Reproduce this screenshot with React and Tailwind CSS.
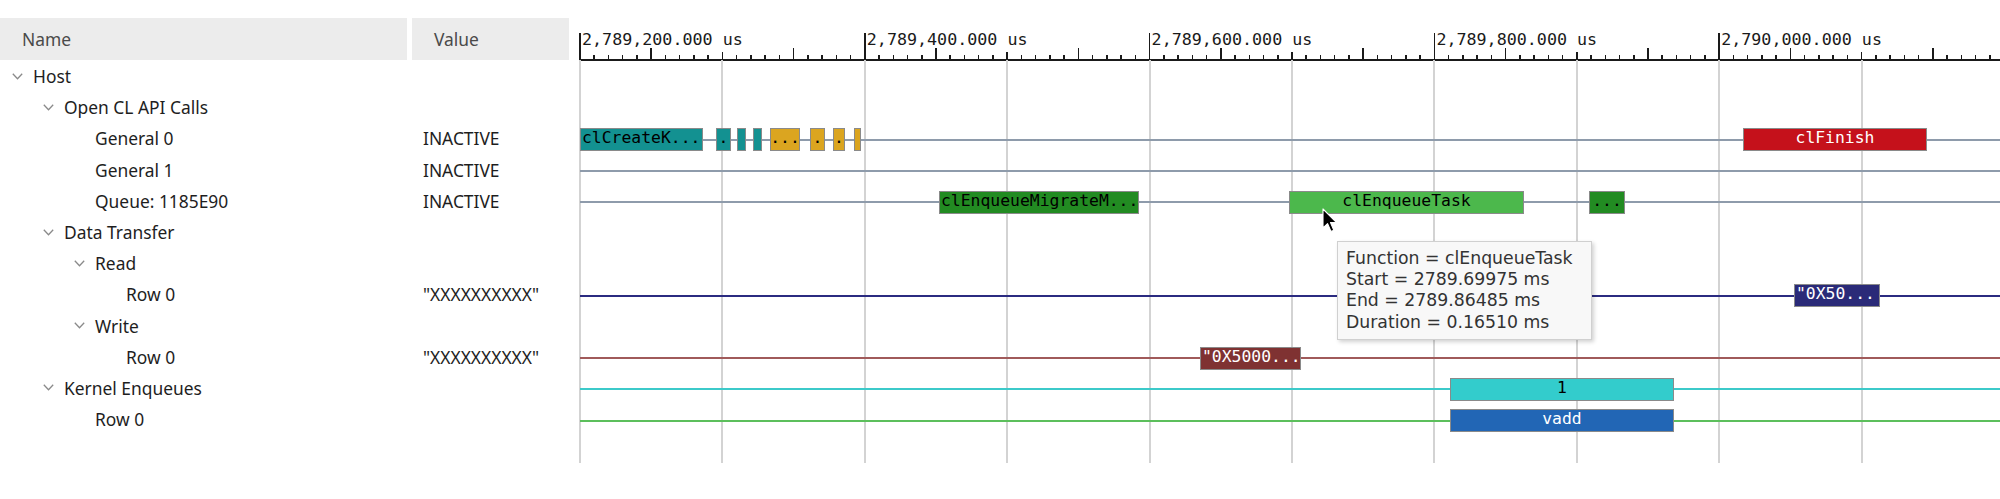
import React from 'react';

const MAJOR = 284.8;
const MINOR = MAJOR / 20;
const WIDTH = 1420;
const LABELS = ['2,789,200.000 us', '2,789,400.000 us', '2,789,600.000 us', '2,789,800.000 us', '2,790,000.000 us'];

const TEAL = 'bg-[#139191] text-black';
const GOLD = 'bg-[#dba520] text-black';

const tree = [
  { name: 'Host', pad: 'pl-[12px]', chev: true },
  { name: 'Open CL API Calls', pad: 'pl-[43px]', chev: true },
  { name: 'General 0', pad: 'pl-[95px]', value: 'INACTIVE' },
  { name: 'General 1', pad: 'pl-[95px]', value: 'INACTIVE' },
  { name: 'Queue: 1185E90', pad: 'pl-[95px]', value: 'INACTIVE' },
  { name: 'Data Transfer', pad: 'pl-[43px]', chev: true },
  { name: 'Read', pad: 'pl-[74px]', chev: true },
  { name: 'Row 0', pad: 'pl-[126px]', value: '"XXXXXXXXXX"' },
  { name: 'Write', pad: 'pl-[74px]', chev: true },
  { name: 'Row 0', pad: 'pl-[126px]', value: '"XXXXXXXXXX"' },
  { name: 'Kernel Enqueues', pad: 'pl-[43px]', chev: true },
  { name: 'Row 0', pad: 'pl-[95px]' },
];

// timeline rows, same order as tree
const lanes = [
  {},
  {},
  {
    line: 'bg-[#8e9bab]',
    bars: [
      { x: 0, w: 123, c: TEAL, t: 'clCreateK...' },
      { x: 136, w: 15, c: TEAL, t: '.', mid: true },
      { x: 157, w: 9, c: TEAL },
      { x: 173, w: 9, c: TEAL },
      { x: 190, w: 30, c: GOLD, t: '...', mid: true },
      { x: 230, w: 15, c: GOLD, t: '.', mid: true },
      { x: 253, w: 12, c: GOLD, t: '.', mid: true },
      { x: 274, w: 7, c: GOLD },
      { x: 1163, w: 184, c: 'bg-[#c5111b] text-white', t: 'clFinish', mid: true },
    ],
  },
  { line: 'bg-[#8e9bab]' },
  {
    line: 'bg-[#8e9bab]',
    bars: [
      { x: 359, w: 200, c: 'bg-[#228b22] text-black', t: 'clEnqueueMigrateM...' },
      { x: 709, w: 235, c: 'bg-[#4cb84c] text-black', t: 'clEnqueueTask', mid: true },
      { x: 1009, w: 36, c: 'bg-[#228b22] text-black', t: '...', mid: true },
    ],
  },
  {},
  {},
  { line: 'bg-[#2b2b80]', bars: [{ x: 1214, w: 86, c: 'bg-[#2a2a78] text-white', t: '"0X50...' }] },
  {},
  { line: 'bg-[#a05a5a]', bars: [{ x: 620, w: 101, c: 'bg-[#7f3232] text-white', t: '"0X5000...' }] },
  { line: 'bg-[#3ccaca]', bars: [{ x: 870, w: 224, c: 'bg-[#33cccc] text-black', t: '1', mid: true }] },
  { line: 'bg-[#5cbf5c]', bars: [{ x: 870, w: 224, c: 'bg-[#2266b5] text-white', t: 'vadd', mid: true }] },
];

function Chevron() {
  return (
    <svg width="11" height="7" viewBox="0 0 11 7" className="mr-[10px] shrink-0">
      <polyline points="0.8,0.8 5.5,5.8 10.2,0.8" fill="none" stroke="#8a8a8a" strokeWidth="1.3" />
    </svg>
  );
}

function Ruler() {
  const ticks = [];
  for (let k = 0; k * MINOR <= WIDTH; k++) {
    let cls = 'top-[55px] h-[5px]';
    if (k % 20 === 0) cls = 'top-[33px] h-[27px]';
    else if (k % 10 === 0) cls = 'top-[52px] h-[8px]';
    else if (k % 5 === 0) cls = 'top-[48px] h-[12px]';
    ticks.push(<div key={k} className={`absolute w-[1.5px] bg-[#1a1a1a] ${cls}`} style={{ left: k * MINOR - 0.75 }} />);
  }
  return (
    <div className="relative h-[60px]">
      {ticks}
      {LABELS.map((l, i) => (
        <div key={l} className="absolute top-[31px] font-['DejaVu_Sans_Mono',monospace] text-[16.7px] leading-none text-[#1a1a1a] whitespace-nowrap" style={{ left: i * MAJOR + 2 }}>
          {l}
        </div>
      ))}
      <div className="absolute left-0 right-0 top-[59px] h-[2px] bg-[#1a1a1a]" />
    </div>
  );
}

export default function App() {
  const grid = [];
  for (let j = 0; j * (MAJOR / 2) <= WIDTH; j++) grid.push(j * (MAJOR / 2));

  return (
    <div className="relative w-[2000px] h-[499px] bg-white overflow-hidden flex">
      {/* names / values */}
      <div className="w-[580px] shrink-0 font-['Noto_Sans',sans-serif] text-[17.4px] text-[#1e1e1e]">
        <div className="mt-[18px] h-[42px] flex text-[#4a4a4a]">
          <div className="w-[407px] bg-[#ececec] flex items-center pl-[22px]">Name</div>
          <div className="w-[5px]" />
          <div className="w-[157px] bg-[#ececec] flex items-center pl-[22px]">Value</div>
        </div>
        <div className="pt-[2px]">
          {tree.map((r, i) => (
            <div key={i} className="h-[31.2px] flex items-center pb-[3px] whitespace-nowrap">
              <div className={`w-[423px] flex items-center ${r.pad}`}>
                {r.chev && <Chevron />}
                <span>{r.name}</span>
              </div>
              <div>{r.value}</div>
            </div>
          ))}
        </div>
      </div>

      {/* timeline */}
      <div className="relative flex-1">
        <Ruler />
        <div className="relative h-[403px]">
          {grid.map((x) => (
            <div key={x} className="absolute top-0 bottom-0 w-[2px] bg-[#d3d3d3]" style={{ left: x - 1 }} />
          ))}
          <div className="pt-[2px]">
            {lanes.map((lane, i) => (
              <div key={i} className="relative h-[31.2px]">
                {lane.line && <div className={`absolute left-0 right-0 top-[14.6px] h-[2px] ${lane.line}`} />}
                {(lane.bars || []).map((b, n) => (
                  <div
                    key={n}
                    className={`absolute top-[4.1px] h-[23px] border border-[#8a8a8a] whitespace-nowrap font-['DejaVu_Sans_Mono',monospace] text-[16.4px] leading-[17.5px] ${b.c} ${b.mid ? 'flex justify-center' : 'pl-[1px]'}`}
                    style={{ left: b.x, width: b.w }}
                  >
                    {b.t}
                  </div>
                ))}
              </div>
            ))}
          </div>
        </div>
      </div>

      {/* hover tooltip */}
      <div className="absolute left-[1337px] top-[241px] w-[255px] border border-[#d0d0d0] bg-[#f8f8f8] pl-[8px] pt-[5.7px] pb-[6px] shadow-[2px_2px_4px_rgba(0,0,0,0.18)] font-['DejaVu_Sans',sans-serif] text-[17.3px] leading-[21.3px] text-[#333333] whitespace-nowrap">
        <div>Function = clEnqueueTask</div>
        <div>Start = 2789.69975 ms</div>
        <div>End = 2789.86485 ms</div>
        <div>Duration = 0.16510 ms</div>
      </div>

      {/* mouse pointer */}
      <svg className="absolute left-[1322px] top-[208px]" width="16" height="26" viewBox="0 0 16 26">
        <path d="M1 1 L1 20 L5.6 15.6 L9 23.5 L11.8 22.3 L8.5 14.6 L14.6 14.6 Z" fill="#000" stroke="#fff" strokeWidth="1.1" strokeLinejoin="round" />
      </svg>
    </div>
  );
}
